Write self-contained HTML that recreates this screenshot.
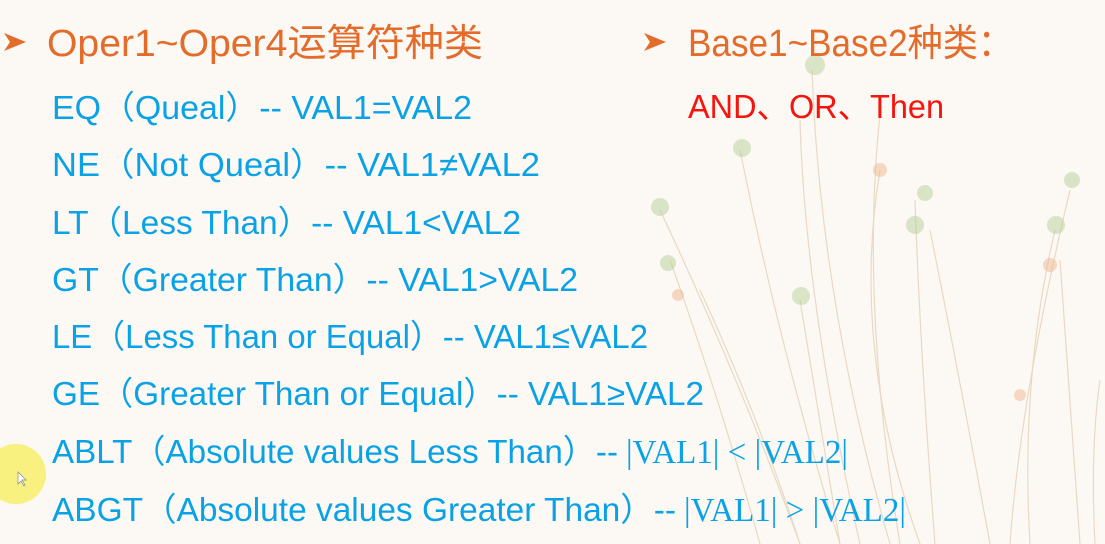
<!DOCTYPE html>
<html><head><meta charset="utf-8"><style>
html,body{margin:0;padding:0;background:#fcf8f4;}
svg{display:block}
text{font-family:"Liberation Sans","Noto Sans CJK SC",sans-serif;}
</style></head><body>
<svg width="1105" height="544" viewBox="0 0 1105 544" xmlns="http://www.w3.org/2000/svg">
<rect width="1105" height="544" fill="#fcf8f4"/>
<g fill="none" stroke="#e2cfb5" stroke-width="1.2" opacity="0.75">
<path d="M812 70 Q820 300 890 544"/>
<path d="M800 120 Q805 300 860 544"/>
<path d="M740 150 Q780 350 840 544"/>
<path d="M660 210 Q740 380 800 544"/>
<path d="M670 260 Q720 400 760 544"/>
<path d="M800 300 Q820 420 840 544"/>
<path d="M880 115 Q860 300 900 544"/>
<path d="M880 170 Q850 350 920 544"/>
<path d="M915 200 Q920 350 935 544"/>
<path d="M930 230 Q960 380 990 544"/>
<path d="M1070 190 Q1020 400 1010 544"/>
<path d="M1055 230 Q1020 380 1030 544"/>
<path d="M1060 260 Q1070 400 1080 544"/>
<path d="M1100 380 Q1090 450 1095 544"/>
<path d="M700 290 Q760 420 800 544"/>
</g>
<g opacity="0.5">
<circle cx="815" cy="65" r="10" fill="#b8cf9a"/>
<circle cx="742" cy="148" r="9" fill="#b8cf9a"/>
<circle cx="660" cy="207" r="9" fill="#b8cf9a"/>
<circle cx="668" cy="263" r="8" fill="#b8cf9a"/>
<circle cx="801" cy="296" r="9" fill="#b8cf9a"/>
<circle cx="925" cy="193" r="8" fill="#b8cf9a"/>
<circle cx="915" cy="225" r="9" fill="#b8cf9a"/>
<circle cx="1072" cy="180" r="8" fill="#b8cf9a"/>
<circle cx="1056" cy="225" r="9" fill="#b8cf9a"/>
<circle cx="880" cy="170" r="7" fill="#f0b890"/>
<circle cx="1050" cy="265" r="7" fill="#f0b890"/>
<circle cx="1020" cy="395" r="6" fill="#f0b890"/>
<circle cx="678" cy="295" r="6" fill="#f0b890"/>
</g>
<circle cx="16" cy="474" r="30" fill="#f7ee72" opacity="0.9"/>
<path d="M18 472 L18 484 L21 481 L24 486 L25 485 L22 480 L26 480 Z" fill="#fff" stroke="#888" stroke-width="0.7"/>
<g fill="#e36c2b">
<path d="M4 33 L26 42 L4 51 L10 42 Z"/>
<path d="M644 33 L666 42 L644 51 L650 42 Z"/>
</g>
<g font-size="38" fill="#e36c2b">
<text x="47" y="56" textLength="436" lengthAdjust="spacingAndGlyphs">Oper1~Oper4运算符种类</text>
<text x="688" y="56" textLength="325" lengthAdjust="spacingAndGlyphs">Base1~Base2种类：</text>
</g>
<text x="688" y="118" font-size="33" fill="#f5140e" textLength="256" lengthAdjust="spacingAndGlyphs">AND、OR、Then</text>
<g font-size="33" fill="#0aa2e6">
<text x="52" y="119" textLength="420" lengthAdjust="spacingAndGlyphs">EQ（Queal）--  VAL1=VAL2</text>
<text x="52" y="176" textLength="488" lengthAdjust="spacingAndGlyphs">NE（Not Queal）--  VAL1≠VAL2</text>
<text x="52" y="234" textLength="469" lengthAdjust="spacingAndGlyphs">LT（Less Than）--  VAL1&lt;VAL2</text>
<text x="52" y="291" textLength="526" lengthAdjust="spacingAndGlyphs">GT（Greater Than）--  VAL1&gt;VAL2</text>
<text x="52" y="348" textLength="596" lengthAdjust="spacingAndGlyphs">LE（Less Than or Equal）-- VAL1≤VAL2</text>
<text x="52" y="405" textLength="652" lengthAdjust="spacingAndGlyphs">GE（Greater Than or Equal）-- VAL1≥VAL2</text>
<text x="52" y="463" textLength="566" lengthAdjust="spacingAndGlyphs">ABLT（Absolute values Less Than）--</text>
<text x="52" y="521" textLength="624" lengthAdjust="spacingAndGlyphs">ABGT（Absolute values Greater Than）--</text>
</g>
<g font-size="34" fill="#0aa2e6">
<text x="626" y="463" textLength="222" lengthAdjust="spacingAndGlyphs" style="font-family:'Liberation Serif',serif">|VAL1| &lt; |VAL2|</text>
<text x="684" y="521" textLength="222" lengthAdjust="spacingAndGlyphs" style="font-family:'Liberation Serif',serif">|VAL1| &gt; |VAL2|</text>
</g>
</svg>
</body></html>
